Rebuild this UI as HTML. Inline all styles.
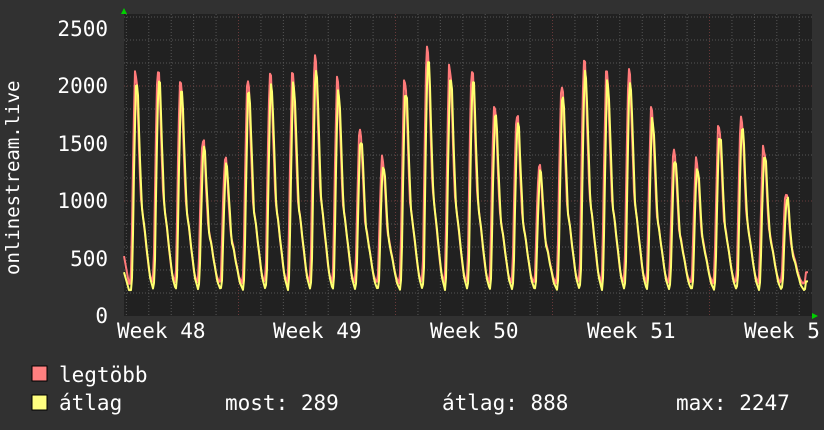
<!DOCTYPE html>
<html><head><meta charset="utf-8"><style>
html,body{margin:0;padding:0;background:#313131;}
body{width:824px;height:430px;overflow:hidden;position:relative;font-family:"DejaVu Sans Mono","Liberation Mono",monospace;color:#fff;}
svg{position:absolute;left:0;top:0}
text{font-family:"DejaVu Sans Mono","Liberation Mono",monospace;fill:#fff}
</style></head><body>
<svg id="g" width="824" height="430" xmlns="http://www.w3.org/2000/svg">
<rect x="124" y="14" width="688" height="302" fill="#212121"/>
<g id="grid"></g>
<polyline id="red" fill="none" stroke="#ff7a7a" stroke-width="2" stroke-linejoin="round"/>
<polyline id="yel" fill="none" stroke="#ffff70" stroke-width="2" stroke-linejoin="round"/>
<polygon points="121,14 127,14 124,8" fill="#00d000"/>
<polygon points="812,313 812,319 818,316" fill="#00d000"/>
<g font-size="21" text-anchor="end">
<text x="108" y="36">2500</text>
<text x="108" y="93">2000</text>
<text x="108" y="151">1500</text>
<text x="108" y="208">1000</text>
<text x="108" y="266">500</text>
<text x="108" y="323">0</text>
</g>
<g font-size="21">
<text x="117" y="338">Week 48</text>
<text x="273" y="338">Week 49</text>
<text x="430" y="338">Week 50</text>
<text x="587" y="338">Week 51</text>
<text x="744" y="338">Week 5</text>
</g>
<text font-size="19" transform="translate(19,275) rotate(-90)">onlinestream.live</text>
<rect x="32" y="366" width="15" height="15" fill="#ff8080" stroke="#000" stroke-width="1"/>
<rect x="32" y="395" width="15" height="15" fill="#ffff80" stroke="#000" stroke-width="1"/>
<g font-size="21">
<text x="59" y="382">legtöbb</text>
<text x="59" y="410">átlag</text>
<text x="225" y="410">most: 289</text>
<text x="442" y="410">átlag: 888</text>
<text x="676" y="410">max: 2247</text>
</g>
</svg>
<script>
var ns="http://www.w3.org/2000/svg",g=document.getElementById('grid');
function ln(x1,y1,x2,y2,c){var l=document.createElementNS(ns,'line');l.setAttribute('x1',x1);l.setAttribute('y1',y1);l.setAttribute('x2',x2);l.setAttribute('y2',y2);l.setAttribute('stroke',c);l.setAttribute('stroke-dasharray','1,2');g.appendChild(l);}
for(var v=100;v<=2600;v+=100){var y=316-v*0.23;if(y<14)break;ln(124,y,812,y,v%500==0?'#6a3a3a':'#555');}
for(var i=-5;i<31;i++){var x=238.5+i*22.43;if(x<=124||x>=812)continue;ln(x,14,x,316,(i%7==0)?'#6a3a3a':'#555');}
var P=[2130,2160,2060,1540,1380,2050,2110,2110,2260,2060,1620,1380,2060,2360,2180,2160,1840,1760,1320,2000,2230,2130,2140,1800,1440,1360,1660,1740,1470,1080,400];
var F=[[0,0],[0.06,0.08],[0.14,0.6],[0.22,1],[0.3,0.97],[0.38,0.7],[0.48,0.4],[0.58,0.32],[0.7,0.2],[0.85,0.06],[1,0]];
function f(t){for(var i=1;i<F.length;i++){if(t<=F[i][0]){var a=F[i-1],b=F[i];return a[1]+(b[1]-a[1])*(t-a[0])/(b[0]-a[0]);}}return 0;}
function val(x,sh,base,sc,st){var u=(x-sh-130)/22.43;var k=Math.floor(u),t=u-k;if(k<0){return base+(st-base)*Math.max(0,1-(x-124)/5);}var p=P[Math.min(k,P.length-1)]*sc;var j=Math.sin(x*1.7)*25;return base+(p-base)*f(t)+j*f(t);}
var r=[],yv=[];
for(var x=124;x<=808;x+=1){var a=val(x,0,280,1,520),b=val(x,1,225,0.95,380);if(x>=806){a=380;b=300;}r.push(x+','+(316-a*0.1152).toFixed(1));yv.push(x+','+(316-b*0.1152).toFixed(1));}
document.getElementById('red').setAttribute('points',r.join(' '));
document.getElementById('yel').setAttribute('points',yv.join(' '));
</script>
</body></html>
